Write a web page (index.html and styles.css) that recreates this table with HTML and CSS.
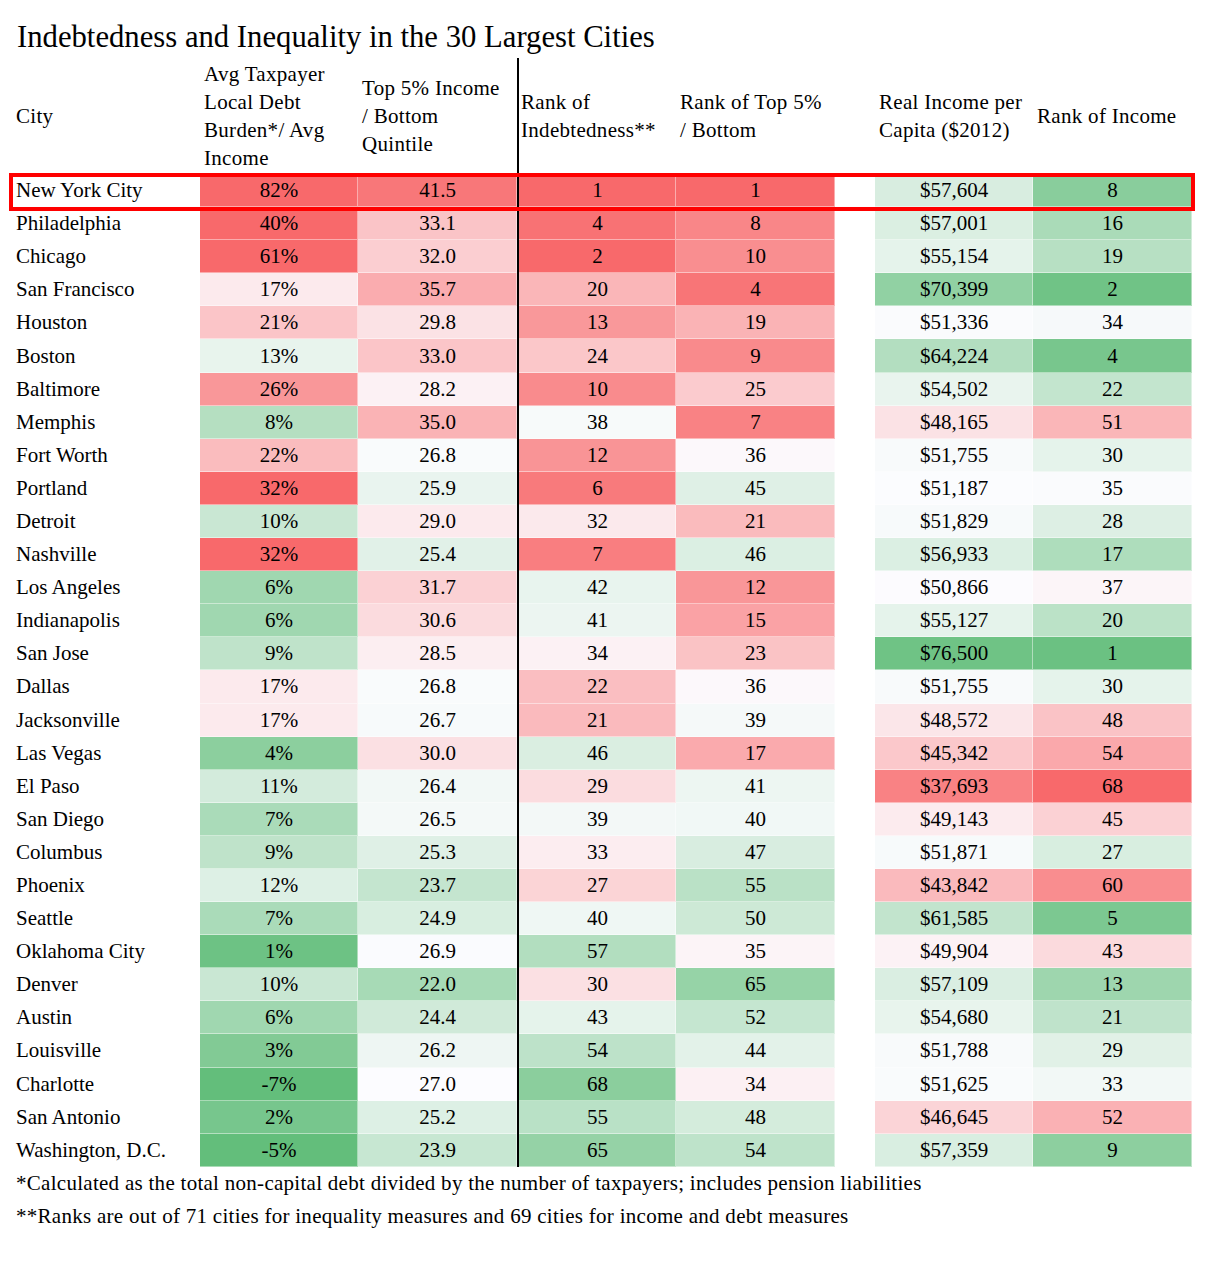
FILE: index.html
```html
<!DOCTYPE html>
<html lang="en">
<head>
<meta charset="utf-8">
<title>Indebtedness and Inequality in the 30 Largest Cities</title>
<link rel="stylesheet" href="styles.css">
</head>
<body>
<div class="page">
  <h1 class="title">Indebtedness and Inequality in the 30 Largest Cities</h1>
  <div class="table">
    <div class="row head">
      <div class="city">City</div>
      <div>Avg Taxpayer<br>Local Debt<br>Burden*/ Avg<br>Income</div>
      <div>Top 5% Income<br>/ Bottom<br>Quintile</div>
      <div class="rule">Rank of<br>Indebtedness**</div>
      <div>Rank of Top 5%<br>/ Bottom</div>
      <div class="gap"></div>
      <div>Real Income per<br>Capita ($2012)</div>
      <div>Rank of Income</div>
    </div>
    <div class="row"><div class="city">New York City</div><div class="v c2">82%</div><div class="v c3">41.5</div><div class="v c4 rule">1</div><div class="v c5">1</div><div class="gap"></div><div class="v c6">$57,604</div><div class="v c7">8</div></div>
    <div class="row"><div class="city">Philadelphia</div><div class="v c2">40%</div><div class="v c3">33.1</div><div class="v c4 rule">4</div><div class="v c5">8</div><div class="gap"></div><div class="v c6">$57,001</div><div class="v c7">16</div></div>
    <div class="row"><div class="city">Chicago</div><div class="v c2">61%</div><div class="v c3">32.0</div><div class="v c4 rule">2</div><div class="v c5">10</div><div class="gap"></div><div class="v c6">$55,154</div><div class="v c7">19</div></div>
    <div class="row"><div class="city">San Francisco</div><div class="v c2">17%</div><div class="v c3">35.7</div><div class="v c4 rule">20</div><div class="v c5">4</div><div class="gap"></div><div class="v c6">$70,399</div><div class="v c7">2</div></div>
    <div class="row"><div class="city">Houston</div><div class="v c2">21%</div><div class="v c3">29.8</div><div class="v c4 rule">13</div><div class="v c5">19</div><div class="gap"></div><div class="v c6">$51,336</div><div class="v c7">34</div></div>
    <div class="row"><div class="city">Boston</div><div class="v c2">13%</div><div class="v c3">33.0</div><div class="v c4 rule">24</div><div class="v c5">9</div><div class="gap"></div><div class="v c6">$64,224</div><div class="v c7">4</div></div>
    <div class="row"><div class="city">Baltimore</div><div class="v c2">26%</div><div class="v c3">28.2</div><div class="v c4 rule">10</div><div class="v c5">25</div><div class="gap"></div><div class="v c6">$54,502</div><div class="v c7">22</div></div>
    <div class="row"><div class="city">Memphis</div><div class="v c2">8%</div><div class="v c3">35.0</div><div class="v c4 rule">38</div><div class="v c5">7</div><div class="gap"></div><div class="v c6">$48,165</div><div class="v c7">51</div></div>
    <div class="row"><div class="city">Fort Worth</div><div class="v c2">22%</div><div class="v c3">26.8</div><div class="v c4 rule">12</div><div class="v c5">36</div><div class="gap"></div><div class="v c6">$51,755</div><div class="v c7">30</div></div>
    <div class="row"><div class="city">Portland</div><div class="v c2">32%</div><div class="v c3">25.9</div><div class="v c4 rule">6</div><div class="v c5">45</div><div class="gap"></div><div class="v c6">$51,187</div><div class="v c7">35</div></div>
    <div class="row"><div class="city">Detroit</div><div class="v c2">10%</div><div class="v c3">29.0</div><div class="v c4 rule">32</div><div class="v c5">21</div><div class="gap"></div><div class="v c6">$51,829</div><div class="v c7">28</div></div>
    <div class="row"><div class="city">Nashville</div><div class="v c2">32%</div><div class="v c3">25.4</div><div class="v c4 rule">7</div><div class="v c5">46</div><div class="gap"></div><div class="v c6">$56,933</div><div class="v c7">17</div></div>
    <div class="row"><div class="city">Los Angeles</div><div class="v c2">6%</div><div class="v c3">31.7</div><div class="v c4 rule">42</div><div class="v c5">12</div><div class="gap"></div><div class="v c6">$50,866</div><div class="v c7">37</div></div>
    <div class="row"><div class="city">Indianapolis</div><div class="v c2">6%</div><div class="v c3">30.6</div><div class="v c4 rule">41</div><div class="v c5">15</div><div class="gap"></div><div class="v c6">$55,127</div><div class="v c7">20</div></div>
    <div class="row"><div class="city">San Jose</div><div class="v c2">9%</div><div class="v c3">28.5</div><div class="v c4 rule">34</div><div class="v c5">23</div><div class="gap"></div><div class="v c6">$76,500</div><div class="v c7">1</div></div>
    <div class="row"><div class="city">Dallas</div><div class="v c2">17%</div><div class="v c3">26.8</div><div class="v c4 rule">22</div><div class="v c5">36</div><div class="gap"></div><div class="v c6">$51,755</div><div class="v c7">30</div></div>
    <div class="row"><div class="city">Jacksonville</div><div class="v c2">17%</div><div class="v c3">26.7</div><div class="v c4 rule">21</div><div class="v c5">39</div><div class="gap"></div><div class="v c6">$48,572</div><div class="v c7">48</div></div>
    <div class="row"><div class="city">Las Vegas</div><div class="v c2">4%</div><div class="v c3">30.0</div><div class="v c4 rule">46</div><div class="v c5">17</div><div class="gap"></div><div class="v c6">$45,342</div><div class="v c7">54</div></div>
    <div class="row"><div class="city">El Paso</div><div class="v c2">11%</div><div class="v c3">26.4</div><div class="v c4 rule">29</div><div class="v c5">41</div><div class="gap"></div><div class="v c6">$37,693</div><div class="v c7">68</div></div>
    <div class="row"><div class="city">San Diego</div><div class="v c2">7%</div><div class="v c3">26.5</div><div class="v c4 rule">39</div><div class="v c5">40</div><div class="gap"></div><div class="v c6">$49,143</div><div class="v c7">45</div></div>
    <div class="row"><div class="city">Columbus</div><div class="v c2">9%</div><div class="v c3">25.3</div><div class="v c4 rule">33</div><div class="v c5">47</div><div class="gap"></div><div class="v c6">$51,871</div><div class="v c7">27</div></div>
    <div class="row"><div class="city">Phoenix</div><div class="v c2">12%</div><div class="v c3">23.7</div><div class="v c4 rule">27</div><div class="v c5">55</div><div class="gap"></div><div class="v c6">$43,842</div><div class="v c7">60</div></div>
    <div class="row"><div class="city">Seattle</div><div class="v c2">7%</div><div class="v c3">24.9</div><div class="v c4 rule">40</div><div class="v c5">50</div><div class="gap"></div><div class="v c6">$61,585</div><div class="v c7">5</div></div>
    <div class="row"><div class="city">Oklahoma City</div><div class="v c2">1%</div><div class="v c3">26.9</div><div class="v c4 rule">57</div><div class="v c5">35</div><div class="gap"></div><div class="v c6">$49,904</div><div class="v c7">43</div></div>
    <div class="row"><div class="city">Denver</div><div class="v c2">10%</div><div class="v c3">22.0</div><div class="v c4 rule">30</div><div class="v c5">65</div><div class="gap"></div><div class="v c6">$57,109</div><div class="v c7">13</div></div>
    <div class="row"><div class="city">Austin</div><div class="v c2">6%</div><div class="v c3">24.4</div><div class="v c4 rule">43</div><div class="v c5">52</div><div class="gap"></div><div class="v c6">$54,680</div><div class="v c7">21</div></div>
    <div class="row"><div class="city">Louisville</div><div class="v c2">3%</div><div class="v c3">26.2</div><div class="v c4 rule">54</div><div class="v c5">44</div><div class="gap"></div><div class="v c6">$51,788</div><div class="v c7">29</div></div>
    <div class="row"><div class="city">Charlotte</div><div class="v c2">-7%</div><div class="v c3">27.0</div><div class="v c4 rule">68</div><div class="v c5">34</div><div class="gap"></div><div class="v c6">$51,625</div><div class="v c7">33</div></div>
    <div class="row"><div class="city">San Antonio</div><div class="v c2">2%</div><div class="v c3">25.2</div><div class="v c4 rule">55</div><div class="v c5">48</div><div class="gap"></div><div class="v c6">$46,645</div><div class="v c7">52</div></div>
    <div class="row"><div class="city">Washington, D.C.</div><div class="v c2">-5%</div><div class="v c3">23.9</div><div class="v c4 rule">65</div><div class="v c5">54</div><div class="gap"></div><div class="v c6">$57,359</div><div class="v c7">9</div></div>
    <div class="highlight"></div>
  </div>
  <p class="notes">*Calculated as the total non-capital debt divided by the number of taxpayers; includes pension liabilities<br>**Ranks are out of 71 cities for inequality measures and 69 cities for income and debt measures</p>
</div>
<script src="script.js"></script>
</body>
</html>
```

FILE: styles.css
```css
html, body {
  margin: 0;
  padding: 0;
  background: #ffffff;
}

body {
  font-family: "Liberation Serif", "Times New Roman", serif;
  color: #000000;
}

.page {
  padding: 19px 0 0 10px;
}

.title {
  margin: 0 0 3px 7px;
  font-size: 30.7px;
  font-weight: normal;
  line-height: 36px;
  height: 36px;
  white-space: nowrap;
}

.table {
  position: relative;
  width: 1182px;
}

.row {
  display: grid;
  grid-template-columns: 190px 158px 159px 159px 159px 40px 158px 159px;
  height: 33.1px;
  font-size: 21px;
}

.row > div {
  display: flex;
  align-items: center;
  box-sizing: border-box;
}

.city {
  padding-left: 6px;
  white-space: nowrap;
}

.v {
  justify-content: center;
  box-shadow: inset -1px -1px 0 rgba(255, 255, 255, 0.45);
}

.rule {
  border-left: 2px solid #000000;
}

.head {
  height: 116px;
  line-height: 28px;
  letter-spacing: 0.3px;
}

.head > div {
  padding-left: 4px;
  border-bottom: 1px solid #222222;
  white-space: nowrap;
}

.head > .city {
  padding-left: 6px;
}

.head > .gap {
  border-bottom: none;
}

.head > .rule {
  padding-left: 2px;
}

.highlight {
  position: absolute;
  left: -1px;
  top: 115px;
  width: 1186px;
  height: 38px;
  box-sizing: border-box;
  border: 4px solid #ff0000;
  pointer-events: none;
}

.notes {
  margin: 0;
  padding-left: 6px;
  font-size: 21px;
  letter-spacing: 0.28px;
  line-height: 33px;
  white-space: nowrap;
}
```

FILE: script.js
```js
(function () {
  var RED = [248, 105, 107];
  var WHITE = [252, 252, 255];
  var GREEN = [99, 190, 123];
  // mid: white point; red/green: values at which the colour saturates
  var scales = {
    c2: { mid: 15, red: 31, green: 0 },
    c3: { mid: 27, red: 43, green: 18 },
    c4: { mid: 36.5, red: 2, green: 79 },
    c5: { mid: 37, red: 1, green: 79 },
    c6: { mid: 51000, red: 35000, green: 78700 },
    c7: { mid: 35.5, red: 68, green: -1 }
  };
  function mix(a, b, t) {
    return [0, 1, 2].map(function (i) { return Math.round(a[i] + (b[i] - a[i]) * t); });
  }
  function colour(v, s) {
    var redSide = (s.red > s.mid) ? v >= s.mid : v <= s.mid;
    var end = redSide ? s.red : s.green;
    var t = (v - s.mid) / (end - s.mid);
    t = Math.max(0, Math.min(1, t));
    var c = mix(WHITE, redSide ? RED : GREEN, t);
    return "rgb(" + c.join(",") + ")";
  }
  Object.keys(scales).forEach(function (key) {
    var cells = document.querySelectorAll(".v." + key);
    cells.forEach(function (cell) {
      var v = parseFloat(cell.textContent.replace(/[$,%]/g, ""));
      if (!isNaN(v)) cell.style.backgroundColor = colour(v, scales[key]);
    });
  });
})();
```
